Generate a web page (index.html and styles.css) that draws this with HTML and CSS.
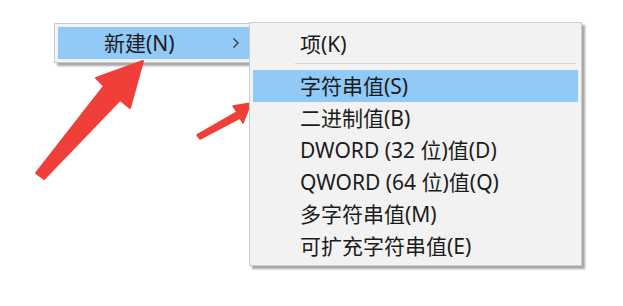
FILE: index.html
```html
<!DOCTYPE html>
<html>

<head>
    <meta charset="utf-8">
    <title>新建</title>
    <link rel="stylesheet" href="styles.css">
</head>

<body>
    <div class="stage">
        <div class="menu parent">
            <div class="item active">
                <span>新建(N)</span>
                <svg class="chevron" width="8" height="12" viewBox="0 0 8 12">
                    <polyline points="1.5,1.5 6,6 1.5,10.5" fill="none" stroke="#3a3a3a" stroke-width="1.4"/>
                </svg>
            </div>
        </div>

        <div class="menu sub">
            <div class="item">项(K)</div>
            <div class="sep"></div>
            <div class="item active">字符串值(S)</div>
            <div class="item">二进制值(B)</div>
            <div class="item">DWORD (32 位)值(D)</div>
            <div class="item">QWORD (64 位)值(Q)</div>
            <div class="item">多字符串值(M)</div>
            <div class="item">可扩充字符串值(E)</div>
        </div>

        <!-- 红色箭头标注 -->
        <svg class="marks" width="623" height="306" viewBox="0 0 623 306">
            <polygon points="143,61 130,108 120,100 44,179 36,173 104,86 96,78" fill="#ef3f38" stroke="#ef3f38" stroke-width="2" stroke-linejoin="round"/>
            <polygon points="251,103 243,123 240,118 200,139 197,135 237,112 233,106" fill="#ef3f38" stroke="#ef3f38" stroke-width="1.5" stroke-linejoin="round"/>
        </svg>
    </div>
</body>

</html>
```

FILE: styles.css
```css
body {
    margin: 0;
    background: #fff;
    font-family: "Noto Sans", "Noto Sans CJK SC", sans-serif;
    color: #1c1c1c;
}

.stage {
    position: relative;
    width: 623px;
    height: 306px;
    box-sizing: border-box;
    padding: 22px 0 0 54px;
    display: flex;
    align-items: flex-start;
    overflow: hidden;
}

.menu {
    background: #f2f2f2;
    border: 1px solid #cdcdcd;
    box-shadow: 3px 3px 2px rgba(0, 0, 0, 0.35);
}

.parent {
    margin-top: 1px;
    width: 193px;
    padding: 3px 0 3px 3px;
}

.sub {
    position: relative;
    z-index: 1;
    margin-left: -3px;
    width: 325px;
    padding: 5px 3px 3px;
}

.item {
    height: 32px;
    line-height: 32px;
    font-size: 21px;
    padding-left: 47px;
    white-space: nowrap;
}

.parent .item {
    display: flex;
    align-items: center;
    justify-content: space-between;
    padding-left: 46px;
    padding-right: 11px;
}

.active {
    background: #91c9f7;
}

.sep {
    height: 1px;
    background: #d5d5d5;
    margin: 3px 2px 6px 42px;
}

.marks {
    position: absolute;
    left: 0;
    top: 0;
    pointer-events: none;
}
```
